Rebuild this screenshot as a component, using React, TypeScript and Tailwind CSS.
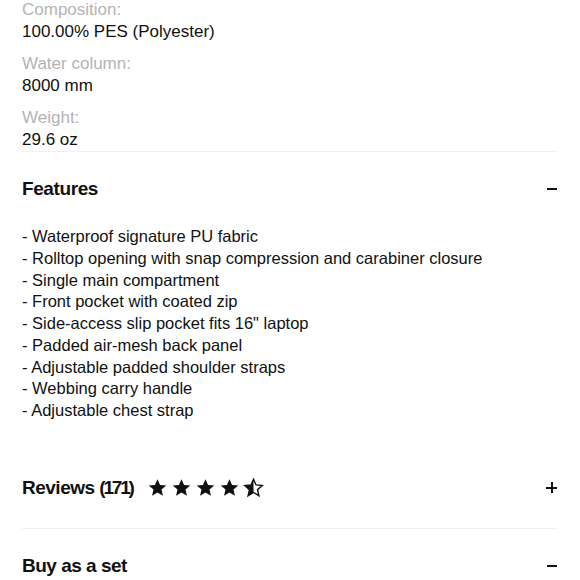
const specs = [
  { label: "Composition:", value: "100.00% PES (Polyester)" },
  { label: "Water column:", value: "8000 mm" },
  { label: "Weight:", value: "29.6 oz" },
];

const features = [
  "Waterproof signature PU fabric",
  "Rolltop opening with snap compression and carabiner closure",
  "Single main compartment",
  "Front pocket with coated zip",
  'Side-access slip pocket fits 16" laptop',
  "Padded air-mesh back panel",
  "Adjustable padded shoulder straps",
  "Webbing carry handle",
  "Adjustable chest strap",
];

function Star({ half = false }: { half?: boolean }) {
  const d = "M12 2.5l2.9 6.6 7.1.6-5.4 4.7 1.6 7-6.2-3.7-6.2 3.7 1.6-7L2 9.7l7.1-.6z";
  return (
    <svg width="21" height="21" viewBox="0 0 24 24">
      {half ? (
        <>
          <defs>
            <clipPath id="halfclip">
              <rect x="0" y="0" width="12" height="24" />
            </clipPath>
          </defs>
          <path d={d} fill="none" stroke="#111" strokeWidth="1.6" strokeLinejoin="miter" />
          <path d={d} fill="#111" clipPath="url(#halfclip)" />
        </>
      ) : (
        <path d={d} fill="#111" />
      )}
    </svg>
  );
}

function Minus() {
  return <span className="block w-[10px] h-[2.5px] bg-[#111]" />;
}

function Plus() {
  return (
    <span className="relative block w-[11px] h-[11px]">
      <span className="absolute left-0 top-[4.5px] w-[11px] h-[2px] bg-[#111]" />
      <span className="absolute top-0 left-[4.5px] w-[2px] h-[11px] bg-[#111]" />
    </span>
  );
}

export default function App() {
  return (
    <div className="w-[580px] h-[580px] overflow-hidden bg-white text-[#111] font-['Liberation_Sans',Arial,sans-serif]">
      <div className="px-[22px] -mt-px">
        {/* specs */}
        <div className="flex flex-col gap-[10px] border-b border-[#f1f1f1]">
          {specs.map((s) => (
            <div key={s.label} className="text-[17px] leading-[22px]">
              <p className="text-[#b4b4b4]">{s.label}</p>
              <p>{s.value}</p>
            </div>
          ))}
        </div>

        {/* features */}
        <div className="pt-[25px]">
          <div className="flex items-center justify-between h-[24px] pr-[1px]">
            <h2 className="text-[19px] font-bold tracking-[-0.4px]">Features</h2>
            <Minus />
          </div>
          <ul className="mt-[25px] text-[16.5px] leading-[21.75px]">
            {features.map((f) => (
              <li key={f}>- {f}</li>
            ))}
          </ul>
        </div>

        {/* reviews */}
        <div className="mt-[54px] flex items-center justify-between h-[24px] pr-[1px]">
          <div className="flex items-center gap-[14px]">
            <h2 className="text-[19px] font-bold tracking-[-0.5px]">
              Reviews <span className="tracking-[-2.2px]">(171)</span>
            </h2>
            <div className="flex items-center gap-[3px]">
              <Star />
              <Star />
              <Star />
              <Star />
              <Star half />
            </div>
          </div>
          <Plus />
        </div>
        <div className="mt-[28px] border-t border-[#f1f1f1]" />

        {/* buy as a set */}
        <div className="mt-[25px] flex items-center justify-between h-[24px] pr-[1px]">
          <h2 className="text-[19px] font-bold tracking-[-0.5px]">Buy as a set</h2>
          <Minus />
        </div>
      </div>
    </div>
  );
}
